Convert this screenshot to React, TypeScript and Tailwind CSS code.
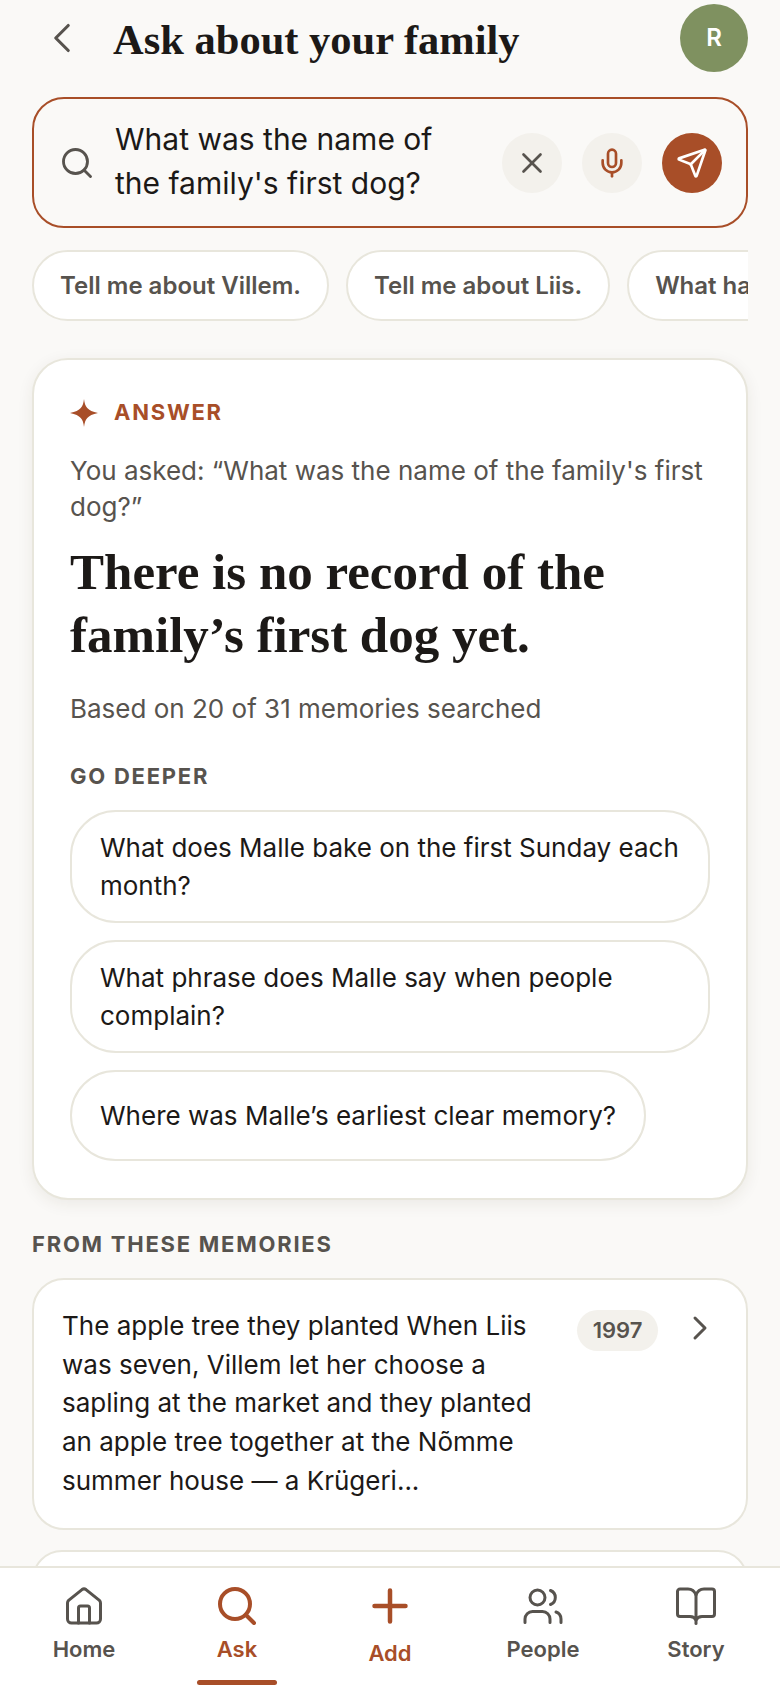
import { ChevronLeft, ChevronRight, Mic, Search, Send, X } from 'lucide-react'
import type { ReactNode } from 'react'

const SANS = "font-['Inter',sans-serif]"

function Spark() {
  return (
    <svg width="28" height="28" viewBox="0 0 28 28" fill="#A84E28">
      <path d="M14 0 C15 8 17 11.5 28 14 C17 16.5 15 20 14 28 C13 20 11 16.5 0 14 C11 11.5 13 8 14 0 Z" />
    </svg>
  )
}

function HomeIcon() {
  return (
    <svg width="38" height="38" viewBox="0 0 38 38" fill="none" stroke="#57534E" strokeWidth="3" strokeLinejoin="round" strokeLinecap="round">
      <path d="M2.5 16 Q2.5 14.5 3.6 13.4 L17 2.6 Q19 1.2 21 2.6 L34.4 13.4 Q35.5 14.5 35.5 16 V32 a4 4 0 0 1 -4 4 H6.5 a4 4 0 0 1 -4 -4 Z" />
      <path d="M13.5 36 V21 a2 2 0 0 1 2 -2 h7 a2 2 0 0 1 2 2 V36" />
    </svg>
  )
}

function AskIcon() {
  return (
    <svg width="38" height="38" viewBox="0 0 38 38" fill="none" stroke="#A84E28" strokeWidth="4" strokeLinecap="round">
      <circle cx="17" cy="17" r="15" />
      <path d="M28 28 L36 36" />
    </svg>
  )
}

function AddIcon() {
  return (
    <svg width="36" height="36" viewBox="0 0 36 36" fill="none" stroke="#A84E28" strokeWidth="4.5" strokeLinecap="round">
      <path d="M18 2.5 V33.5 M2.5 18 H33.5" />
    </svg>
  )
}

function PeopleIcon() {
  return (
    <svg width="40" height="36" viewBox="0 0 40 36" fill="none" stroke="#57534E" strokeWidth="3" strokeLinecap="round" strokeLinejoin="round">
      <circle cx="14.5" cy="9.5" r="7.5" />
      <path d="M2 34.5 V31 a7.5 7.5 0 0 1 7.5 -7.5 h10 a7.5 7.5 0 0 1 7.5 7.5 V34.5" />
      <path d="M27.5 2.5 a7.5 7.5 0 0 1 0 14" />
      <path d="M33 24 a7.5 7.5 0 0 1 5 7 V34.5" />
    </svg>
  )
}

function StoryIcon() {
  return (
    <svg width="40" height="38" viewBox="0 0 40 38" fill="none" stroke="#57534E" strokeWidth="3" strokeLinecap="round" strokeLinejoin="round">
      <path d="M20 8 C18.5 4 15.5 2 12 2 H4 a2.5 2.5 0 0 0 -2.5 2.5 V27 a2.5 2.5 0 0 0 2.5 2.5 H14 C17 29.5 19 31 20 33 C21 31 23 29.5 26 29.5 H36 a2.5 2.5 0 0 0 2.5 -2.5 V4.5 A2.5 2.5 0 0 0 36 2 H28 C24.5 2 21.5 4 20 8 Z" />
      <path d="M20 8 V36.5" />
    </svg>
  )
}

function FollowUp({ text }: { text: string }) {
  return (
    <div className="flex min-h-[91px] w-fit items-center rounded-[46px] border-2 border-[#E8E6DC] bg-white px-[28px] py-[16.5px] text-[26px] leading-[38px] text-[#1C1917]">
      {text}
    </div>
  )
}

function Chip({ text }: { text: string }) {
  return (
    <div className="flex h-[71px] shrink-0 items-center rounded-full border-2 border-[#E8E6DC] bg-white px-[26px] text-[24px] font-semibold whitespace-nowrap text-[#57534E]">
      {text}
    </div>
  )
}

function NavItem({ label, active, accent, icon, low }: { label: string; active?: boolean; accent?: boolean; icon: ReactNode; low?: boolean }) {
  return (
    <div className="relative flex w-[153px] flex-col items-center">
      <div className="flex h-[42px] items-center justify-center">{icon}</div>
      <span className={`${low ? 'mt-[11px]' : 'mt-[7px]'} text-[22px] leading-[30px] font-semibold ${active || accent ? 'text-[#A84E28]' : 'text-[#57534E]'}`}>{label}</span>
      {active && <div className="absolute top-[95px] left-[36px] h-[5px] w-[80px] rounded-full bg-[#A84E28]" />}
    </div>
  )
}

export default function App() {
  return (
    <div className={`${SANS} flex h-[1688px] w-[780px] flex-col overflow-hidden bg-[#FAF9F7]`}>
      <div className="min-h-0 flex-1 overflow-hidden px-[32px]">
        {/* Header */}
        <div className="flex h-[76px] items-center">
          <ChevronLeft className="ml-[5px] shrink-0 text-[#57534E]" size={50} strokeWidth={1.5} />
          <h1 className="ml-[26px] flex-1 pt-[3px] font-['Liberation_Serif',serif] text-[42.5px] font-bold text-[#1C1917]">Ask about your family</h1>
          <div className="flex h-[68px] w-[68px] items-center justify-center rounded-full bg-[#7F9160] text-[24px] font-semibold text-white">R</div>
        </div>

        {/* Search */}
        <div className="mt-[21px] flex h-[131px] items-center rounded-[32px] border-2 border-[#A84E28] bg-[#FAF9F7] pr-[24px] pl-[25px]">
          <Search size={36} strokeWidth={1.9} className="shrink-0 text-[#57534E]" />
          <div className="ml-[20px] flex-1 pb-[4px] text-[30px] leading-[44px] text-[#1C1917]">
            What was the name of<br />the family's first dog?
          </div>
          <div className="flex gap-[20px]">
            <div className="flex h-[60px] w-[60px] items-center justify-center rounded-full bg-[#F3F1EC]"><X size={34} strokeWidth={1.9} className="text-[#57534E]" /></div>
            <div className="flex h-[60px] w-[60px] items-center justify-center rounded-full bg-[#F3F1EC]"><Mic size={32} strokeWidth={2} className="text-[#A84E28]" /></div>
            <div className="flex h-[60px] w-[60px] items-center justify-center rounded-full bg-[#A84E28]"><Send size={32} strokeWidth={2} className="text-white" /></div>
          </div>
        </div>

        {/* Suggestions */}
        <div className="mt-[22px] flex gap-[17px] overflow-hidden">
          <Chip text="Tell me about Villem." />
          <Chip text="Tell me about Liis." />
          <Chip text="What happened in 1997?" />
        </div>

        {/* Answer */}
        <div className="mt-[37px] rounded-[36px] border-2 border-[#E8E6DC] bg-white px-[36px] pt-[36px] pb-[37px] shadow-[0_4px_16px_rgba(60,50,30,0.08)]">
          <div className="flex items-center gap-[16px]">
            <Spark />
            <span className="text-[22px] font-bold tracking-[1.76px] text-[#A84E28]">ANSWER</span>
          </div>
          <p className="mt-[24px] text-[26px] leading-[36px] text-[#57534E]">You asked: “What was the name of the family's first dog?”</p>
          <h2 className="mt-[16px] font-['Liberation_Serif',serif] text-[51px] leading-[62.5px] font-bold text-[#1C1917]">There is no record of the family’s first dog yet.</h2>
          <p className="mt-[24px] text-[26px] leading-[37px] text-[#57534E]">Based on 20 of 31 memories searched</p>
          <p className="mt-[35px] text-[22px] leading-[28px] font-bold tracking-[1.76px] text-[#57534E]">GO DEEPER</p>
          <div className="mt-[20px] flex flex-col gap-[17px]">
            <FollowUp text="What does Malle bake on the first Sunday each month?" />
            <FollowUp text="What phrase does Malle say when people complain?" />
            <FollowUp text="Where was Malle’s earliest clear memory?" />
          </div>
        </div>

        {/* Memories */}
        <p className="mt-[30px] text-[22px] leading-[28px] font-bold tracking-[1.76px] text-[#57534E]">FROM THESE MEMORIES</p>
        <div className="mt-[20px] flex h-[252px] items-start rounded-[32px] border-2 border-[#E8E6DC] bg-white pt-[27px] pl-[28px]">
          <p className="w-[480px] text-[26px] leading-[38.7px] text-[#1C1917]">The apple tree they planted When Liis was seven, Villem let her choose a sapling at the market and they planted an apple tree together at the Nõmme summer house — a Krügeri...</p>
          <div className="mt-[3px] ml-[35px] flex h-[41px] w-[81px] items-center justify-center rounded-full bg-[#F3F1EC] text-[22px] font-semibold text-[#57534E]">1997</div>
          <ChevronRight size={40} strokeWidth={1.8} className="mt-[1px] ml-[22px] text-[#57534E]" />
        </div>
        <div className="mt-[20px] h-[60px] rounded-[32px] border-2 border-[#E8E6DC] bg-white" />
      </div>

      {/* Tab bar */}
      <div className="flex h-[122px] shrink-0 justify-center border-t-2 border-[#E8E6DC] bg-white pt-[17px]">
        <NavItem label="Home" icon={<HomeIcon />} />
        <NavItem label="Ask" active icon={<AskIcon />} />
        <NavItem label="Add" low accent icon={<AddIcon />} />
        <NavItem label="People" icon={<PeopleIcon />} />
        <NavItem label="Story" icon={<StoryIcon />} />
      </div>
    </div>
  )
}
